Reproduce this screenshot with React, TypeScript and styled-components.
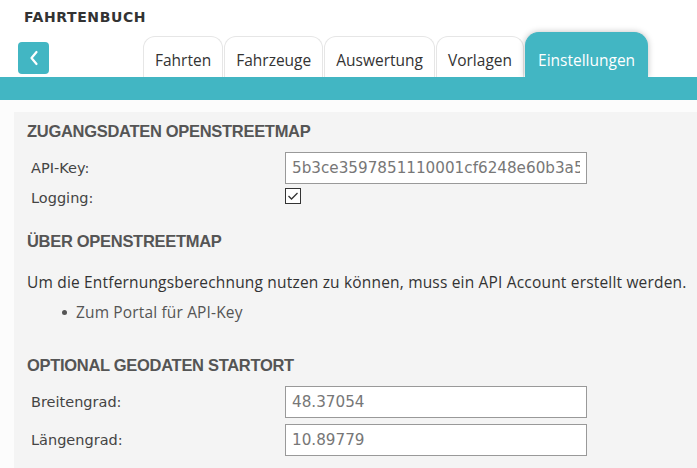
import React from "react";
import styled, { createGlobalStyle } from "styled-components";

const GlobalStyle = createGlobalStyle`
  html, body {
    margin: 0;
    padding: 0;
    background: #ffffff;
    overflow: hidden;
  }
  body {
    font-family: "Open Sans", "Liberation Sans", sans-serif;
    color: #333;
  }
`;

const TEAL = "#42b6c3";

const Page = styled.div`
  width: 697px;
  height: 468px;
  overflow: hidden;
  background: #fcfcfc;
`;

const Header = styled.div`
  background: #ffffff;
`;

const Title = styled.h1`
  margin: 0;
  padding: 8px 0 0 24px;
  height: 24px;
  font-family: "DejaVu Sans", Verdana, sans-serif;
  font-weight: 700;
  font-size: 14px;
  line-height: 18px;
  letter-spacing: 0.6px;
  color: #333;
`;

const NavRow = styled.div`
  display: flex;
  align-items: flex-end;
  height: 45px;
  padding-left: 18px;
`;

const BackButton = styled.button`
  align-self: flex-start;
  margin-top: 10px;
  width: 31px;
  height: 32px;
  border: none;
  border-radius: 4px;
  background: ${TEAL};
  display: flex;
  align-items: center;
  justify-content: center;
  padding: 0;
  cursor: pointer;
`;

const Tabs = styled.div`
  display: flex;
  align-items: flex-end;
  gap: 1px;
  margin-left: 94px;
`;

const Tab = styled.div<{ $active?: boolean }>`
  height: ${(p) => (p.$active ? "45px" : "41px")};
  box-sizing: border-box;
  padding: ${(p) => (p.$active ? "17px 12px 0" : "13px 11px 0")};
  border: 1px solid ${(p) => (p.$active ? TEAL : "#e6e6e6")};
  border-bottom: none;
  border-radius: ${(p) => (p.$active ? "14px 14px 0 0" : "12px 12px 0 0")};
  background: ${(p) => (p.$active ? TEAL : "#ffffff")};
  color: ${(p) => (p.$active ? "#ffffff" : "#333")};
  box-shadow: ${(p) => (p.$active ? "0 0 6px rgba(0,0,0,0.25)" : "none")};
  font-family: "Open Sans", sans-serif;
  font-size: 15.5px;
  line-height: 20px;
  white-space: nowrap;
  position: relative;
  z-index: ${(p) => (p.$active ? 1 : 0)};
`;

const TealBar = styled.div`
  height: 23px;
  background: ${TEAL};
  position: relative;
  z-index: 2;
`;

const Panel = styled.div`
  margin: 12px 0 0 14px;
  padding: 8px 0 20px 13px;
  background: #f4f4f4;
  height: 400px;
`;

const SectionTitle = styled.h2`
  margin: 0;
  height: 26px;
  font-family: "Liberation Sans", Arial, sans-serif;
  font-weight: 700;
  font-size: 16.5px;
  line-height: 22px;
  letter-spacing: -0.3px;
  color: #555;
`;

const FormGrid = styled.div`
  display: grid;
  grid-template-columns: 254px 302px;
  row-gap: 6px;
  align-items: center;
  padding-left: 4px;
  margin-top: 6px;
`;

const Label = styled.label`
  font-family: "DejaVu Sans", Verdana, sans-serif;
  font-size: 14.5px;
  color: #444;
`;

const TextInput = styled.input`
  box-sizing: border-box;
  width: 302px;
  height: 32px;
  border: 1px solid #999;
  background: #ffffff;
  padding: 0 6px;
  font-family: "DejaVu Sans", Verdana, sans-serif;
  font-size: 15.2px;
  color: #777;
  outline: none;
`;

const CheckBox = styled.span`
  box-sizing: border-box;
  width: 16px;
  height: 16px;
  border: 1px solid #333;
  background: #fff;
  display: flex;
  align-items: center;
  justify-content: center;
  margin-top: -4px;
`;

const Paragraph = styled.p`
  margin: 16px 0 0;
  font-family: "Open Sans", sans-serif;
  font-size: 15.5px;
  line-height: 20px;
  letter-spacing: 0.18px;
  color: #333;
  white-space: nowrap;
`;

const List = styled.ul`
  margin: 10px 0 0;
  padding-left: 35px;
  list-style: none;
`;

const ListItem = styled.li`
  display: flex;
  align-items: center;
  font-family: "Open Sans", sans-serif;
  font-size: 15.5px;
  line-height: 20px;
  letter-spacing: 0.15px;
  color: #555;
  &::before {
    content: "";
    width: 5px;
    height: 5px;
    border-radius: 50%;
    background: #555;
    margin: 1px 9px 0 0;
  }
`;

const Spacer = styled.div<{ $h: number }>`
  height: ${(p) => p.$h}px;
`;

const tabs = ["Fahrten", "Fahrzeuge", "Auswertung", "Vorlagen", "Einstellungen"];

export default function App() {
  return (
    <Page>
      <GlobalStyle />
      <Header>
        <Title>FAHRTENBUCH</Title>
        <NavRow>
          <BackButton aria-label="Zurück">
            <svg width="10" height="16" viewBox="0 0 10 16">
              <path
                d="M7.5 2 L2.5 8 L7.5 14"
                fill="none"
                stroke="#fff"
                strokeWidth="2.2"
                strokeLinecap="round"
                strokeLinejoin="round"
              />
            </svg>
          </BackButton>
          <Tabs>
            {tabs.map((t) => (
              <Tab key={t} $active={t === "Einstellungen"}>
                {t}
              </Tab>
            ))}
          </Tabs>
        </NavRow>
      </Header>
      <TealBar />
      <Panel>
        <SectionTitle>ZUGANGSDATEN OPENSTREETMAP</SectionTitle>
        <FormGrid>
          <Label>API-Key:</Label>
          <TextInput readOnly value="5b3ce3597851110001cf6248e60b3a5" />
          <Label>Logging:</Label>
          <CheckBox>
            <svg width="12" height="10" viewBox="0 0 12 10">
              <path d="M1.5 5 L4.5 8 L10.5 2" fill="none" stroke="#333" strokeWidth="1.3" />
            </svg>
          </CheckBox>
        </FormGrid>
        <Spacer $h={24} />
        <SectionTitle>ÜBER OPENSTREETMAP</SectionTitle>
        <Paragraph>
          Um die Entfernungsberechnung nutzen zu können, muss ein API Account erstellt werden.
        </Paragraph>
        <List>
          <ListItem>Zum Portal für API-Key</ListItem>
        </List>
        <Spacer $h={32} />
        <SectionTitle>OPTIONAL GEODATEN STARTORT</SectionTitle>
        <FormGrid>
          <Label>Breitengrad:</Label>
          <TextInput readOnly value="48.37054" />
          <Label>Längengrad:</Label>
          <TextInput readOnly value="10.89779" />
        </FormGrid>
      </Panel>
    </Page>
  );
}
